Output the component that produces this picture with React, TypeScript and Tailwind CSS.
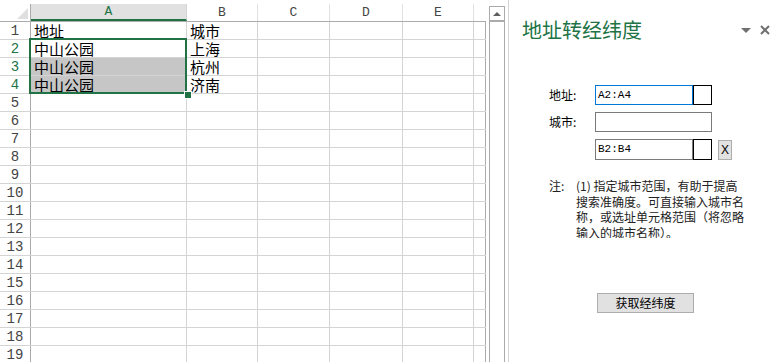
import React from "react";

const cols = [
  { key: "A", w: "w-[156px]" },
  { key: "B", w: "w-[71px]" },
  { key: "C", w: "w-[72px]" },
  { key: "D", w: "w-[73px]" },
  { key: "E", w: "w-[71px]" },
];

const data: Record<number, [string, string]> = {
  1: ["地址", "城市"],
  2: ["中山公园", "上海"],
  3: ["中山公园", "杭州"],
  4: ["中山公园", "济南"],
};

const mono = { fontFamily: '"Liberation Mono", monospace' };
const cjk = { fontFamily: '"Noto Sans CJK SC", "Noto Sans", sans-serif' };

function Sheet() {
  const rows = Array.from({ length: 19 }, (_, i) => i + 1);
  return (
    <div className="relative w-[486px] h-[362px] flex flex-col">
      <div className="h-[4px] shrink-0" />
      {/* header row */}
      <div className="flex h-[18px] shrink-0 border-b border-[#ababab] box-border">
        <div className="w-[31px] h-full border-r border-[#ababab] box-border relative">
          <div className="absolute right-[2px] bottom-[2px] w-0 h-0 border-l-[11px] border-l-transparent border-b-[11px] border-b-[#dfdfdf]" />
        </div>
        {cols.map((c) => (
          <div
            key={c.key}
            className={`${c.w} h-full border-r box-border flex items-center justify-center text-[13px] leading-none ${
              c.key === "A"
                ? "bg-[#e1e1e1] text-[#217346] border-r-[#d4d4d4] border-b-2 border-b-[#217346]"
                : "text-[#444] border-r-[#e1e1e1]"
            }`}
            style={mono}
          >
            {c.key}
          </div>
        ))}
        <div className="w-[12px] h-full" />
      </div>
      {rows.map((r) => (
        <div key={r} className="flex h-[18px] shrink-0 border-b border-[#d4d4d4] box-border">
          <div
            className={`w-[31px] h-full border-r border-[#ababab] box-border flex items-center justify-center text-[14px] leading-none ${
              r >= 2 && r <= 4 ? "text-[#217346]" : "text-[#444]"
            }`}
            style={mono}
          >
            {r}
          </div>
          {cols.map((c, ci) => {
            const txt = data[r] ? (ci === 0 ? data[r][0] : ci === 1 ? data[r][1] : "") : "";
            const sel = ci === 0 && (r === 3 || r === 4);
            return (
              <div
                key={c.key}
                className={`${c.w} h-full border-r border-[#d4d4d4] box-border flex items-center pl-[3px] text-[15px] leading-[16px] text-black whitespace-nowrap ${
                  sel ? "bg-[#c6c6c6]" : ""
                }`}
                style={cjk}
              >
                {txt}
              </div>
            );
          })}
          <div className="w-[12px] h-full border-r border-[#ababab] box-border" />
        </div>
      ))}
      {/* selection overlay */}
      <div className="absolute left-[29px] top-[38px] w-[158px] h-[56px] border-2 border-[#217346] pointer-events-none" />
      <div className="absolute left-[184px] top-[91px] w-[6px] h-[6px] bg-[#217346] border border-white box-content" />
    </div>
  );
}

function Scrollbar() {
  return (
    <div className="w-[16px] h-[362px] flex flex-col pt-[6px] shrink-0">
      <div className="h-[16px] border border-[#ababab] border-b-2 box-border flex items-center justify-center">
        <div className="w-0 h-0 border-l-[4px] border-l-transparent border-r-[4px] border-r-transparent border-b-[4px] border-b-[#606060]" />
      </div>
      <div className="flex-1 border-x border-[#ababab]" />
    </div>
  );
}

function Pane() {
  return (
    <div className="flex-1 h-[362px] border-l border-[#d4d4d4] flex flex-col text-black" style={cjk}>
      <div className="flex items-center h-[28px] mt-[16px] pl-[13px] pr-[8px]">
        <div className="text-[20px] leading-none text-[#217346] flex-1">地址转经纬度</div>
        <div className="w-0 h-0 border-l-[5px] border-l-transparent border-r-[5px] border-r-transparent border-t-[5px] border-t-[#707070] mr-[9px] mt-[1px]" />
        <svg width="10" height="10" viewBox="0 0 10 10" className="mb-[1px]">
          <path d="M1 1 L9 9 M9 1 L1 9" stroke="#707070" strokeWidth="2" />
        </svg>
      </div>
      <div className="flex flex-col pl-[40px] mt-[41px] gap-[7px]">
        <div className="flex items-center h-[20px]">
          <div className="w-[46px] text-[12px] leading-none">地址:</div>
          <div
            className="w-[98px] h-[20px] border border-[#0078d7] box-border flex items-center px-[2px] text-[11px]"
            style={mono}
          >
            A2:A4
          </div>
          <div className="w-[19px] h-[20px] border border-black box-border" />
        </div>
        <div className="flex items-center h-[20px]">
          <div className="w-[46px] text-[12px] leading-none">城市:</div>
          <div className="w-[117px] h-[20px] border border-[#7a7a7a] box-border" />
        </div>
        <div className="flex items-center h-[21px]">
          <div className="w-[46px]" />
          <div
            className="w-[98px] h-[21px] border border-[#7a7a7a] box-border flex items-center px-[2px] text-[11px]"
            style={mono}
          >
            B2:B4
          </div>
          <div className="w-[19px] h-[21px] border border-black box-border" />
          <div
            className="ml-[6px] w-[14px] h-[20px] bg-[#e1e1e1] border border-[#adadad] box-border flex items-center justify-center text-[12px] leading-none"
            style={{ fontFamily: '"Liberation Sans", sans-serif' }}
          >
            X
          </div>
        </div>
      </div>
      <div className="flex pl-[40px] mt-[18px] text-[12px] leading-[15.5px] text-[#222]">
        <div className="w-[27px]">注:</div>
        <div className="h-[60px] overflow-hidden whitespace-nowrap">
          <div>(1) 指定城市范围，有助于提高</div>
          <div>搜索准确度。可直接输入城市名</div>
          <div>称，或选址单元格范围（将忽略</div>
          <div>输入的城市名称）。</div>
        </div>
      </div>
      <div className="flex pl-[88px] mt-[55px]">
        <div className="w-[97px] h-[20px] bg-[#e1e1e1] border border-[#adadad] box-border flex items-center justify-center text-[12px] leading-none">
          获取经纬度
        </div>
      </div>
    </div>
  );
}

export default function App() {
  return (
    <div className="w-[778px] h-[362px] bg-white flex overflow-hidden">
      <Sheet />
      <div className="w-[3px] shrink-0" />
      <Scrollbar />
      <div className="w-[3px] shrink-0" />
      <Pane />
    </div>
  );
}
